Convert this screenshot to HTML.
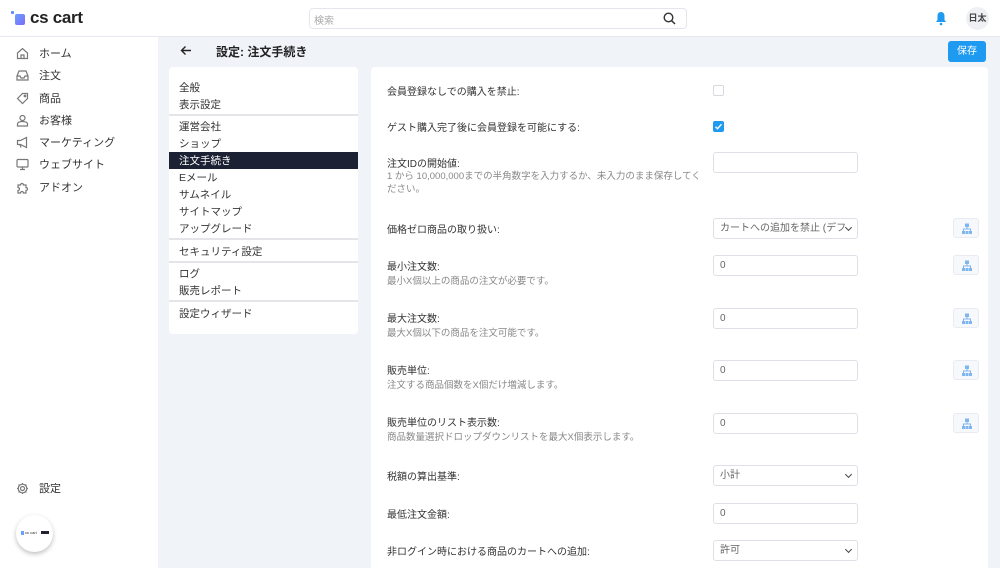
<!DOCTYPE html>
<html style="overflow:hidden;width:1000px;height:568px"><head><meta charset="utf-8"><style>
*{box-sizing:border-box;margin:0;padding:0}
body{width:1000px;height:568px;overflow:hidden;background:#f0f3f8;font-family:"Liberation Sans","Noto Sans CJK JP",sans-serif;color:#333;position:relative;font-size:10px}
.a{position:absolute}
.top{left:0;top:0;width:1000px;height:37px;background:#fff;border-bottom:1px solid #e6e9ef}
.side{left:0;top:37px;width:158px;height:531px;background:#fff}
.nav{left:16px;font-size:11px;color:#333;display:flex;align-items:center}
.nav svg{width:13px;height:13px;margin-right:10px;stroke:#777;fill:none;stroke-width:1.2}
.panel{background:#fff;border-radius:4px}
.mi{left:179px;font-size:10.5px;color:#333}
.sep{left:169px;width:189px;height:2px;background:#e3e5e9}
.lb{left:387px;font-size:10px;color:#333}
.ds{left:387px;font-size:9.5px;color:#888;line-height:13px;width:318px}
.in{left:713px;width:145px;height:21px;border:1px solid #dde1e7;border-radius:3px;background:#fff;font-size:10px;color:#666;padding-left:6px;line-height:19px}
.sel::after{content:"";position:absolute;right:6px;top:6px;width:4px;height:4px;border-right:1.3px solid #444;border-bottom:1.3px solid #444;transform:rotate(45deg)}
.ib{left:953px;width:26px;height:20px;border:1px solid #e8ebf0;border-radius:3px;background:#f6f8fb}
.ib svg{position:absolute;left:8px;top:4px}
</style></head><body>
<div class="a top"></div>
<div class="a" style="left:11px;top:11px;width:3px;height:3px;background:#5b8cff;border-radius:1px"></div>
<div class="a" style="left:15px;top:14px;width:10px;height:11px;background:linear-gradient(135deg,#6aa0ff,#7b6cf6);border-radius:2px"></div>
<div class="a" style="left:30px;top:8px;font-size:17px;font-weight:bold;color:#222;letter-spacing:-0.3px">cs cart</div>
<div class="a" style="left:309px;top:8px;width:378px;height:21px;border:1px solid #e3e6ec;border-radius:4px;background:#fff"></div>
<div class="a" style="left:314px;top:12px;font-size:10px;color:#aaa">検索</div>
<svg class="a" style="left:663px;top:12px" width="13" height="13" viewBox="0 0 13 13"><circle cx="5.5" cy="5.5" r="4.3" fill="none" stroke="#333" stroke-width="1.4"/><path d="M8.6 8.6L12 12" stroke="#333" stroke-width="1.5"/></svg>
<svg class="a" style="left:935px;top:11px" width="12" height="15" viewBox="0 0 12 15"><path d="M6 1C3.5 1 2.5 3 2.5 5v4L1 11h10L9.5 9V5C9.5 3 8.5 1 6 1z" fill="#1e9bf0"/><circle cx="6" cy="13" r="1.3" fill="#1e9bf0"/></svg>
<div class="a" style="left:966px;top:7px;width:23px;height:23px;border-radius:50%;background:#eef0f4;font-size:9px;font-weight:bold;color:#444;text-align:center;line-height:23px">日太</div>

<div class="a side"></div>
<div class="a nav" style="top:45px"><svg viewBox="0 0 13 13"><path d="M1.5 6L6.5 1.5 11.5 6v5.5h-10z M5 11.5V8h3v3.5"/></svg>ホーム</div>
<div class="a nav" style="top:67px"><svg viewBox="0 0 13 13"><path d="M1 7l2-5h7l2 5v4H1z M1 7h3l1 2h3l1-2h3"/></svg>注文</div>
<div class="a nav" style="top:90px"><svg viewBox="0 0 13 13"><path d="M1.5 6.5L6.5 1.5H11.5V6.5L6.5 11.5z"/><circle cx="9" cy="4" r="0.8"/></svg>商品</div>
<div class="a nav" style="top:112px"><svg viewBox="0 0 13 13"><circle cx="6.5" cy="4" r="2.5"/><path d="M1.5 12v-2c0-1.5 2-2.5 5-2.5s5 1 5 2.5v2z"/></svg>お客様</div>
<div class="a nav" style="top:134px"><svg viewBox="0 0 13 13"><path d="M1.5 4.5h3l6-3v10l-6-3h-3z M4 8.5l1 3"/></svg>マーケティング</div>
<div class="a nav" style="top:156px"><svg viewBox="0 0 13 13"><rect x="1" y="1.5" width="11" height="7.5" rx="1"/><path d="M6.5 9v2.5M4 11.5h5"/></svg>ウェブサイト</div>
<div class="a nav" style="top:179px"><svg viewBox="0 0 13 13"><path d="M2 4h2.5a1.5 1.5 0 013 0H10v2.5a1.5 1.5 0 010 3V12H7.5a1.5 1.5 0 00-3 0H2V9.5a1.5 1.5 0 000-3z"/></svg>アドオン</div>
<div class="a nav" style="top:480px"><svg viewBox="0 0 13 13"><circle cx="6.5" cy="6.5" r="2"/><path d="M6.5 1v1.5M6.5 10.5V12M1 6.5h1.5M10.5 6.5H12M2.6 2.6l1 1M9.4 9.4l1 1M2.6 10.4l1-1M9.4 3.6l1-1"/><circle cx="6.5" cy="6.5" r="4.3"/></svg>設定</div>
<div class="a" style="left:16px;top:515px;width:37px;height:37px;border-radius:50%;background:#fff;box-shadow:0 2px 5px rgba(0,0,0,.25)"></div>
<div class="a" style="left:21px;top:531px;width:3px;height:4px;background:#6aa0ff"></div>
<div class="a" style="left:25px;top:530px;font-size:4px;color:#333">cs cart</div>
<div class="a" style="left:41px;top:531px;width:8px;height:3px;background:#223"></div>

<svg class="a" style="left:180px;top:45px" width="12" height="11" viewBox="0 0 12 11"><path d="M11 5.5H1.5M5.5 1.5L1.5 5.5l4 4" fill="none" stroke="#222" stroke-width="1.4"/></svg>
<div class="a" style="left:216px;top:43px;font-size:12px;font-weight:bold;color:#222">設定: 注文手続き</div>
<div class="a" style="left:948px;top:41px;width:38px;height:21px;background:#1e9bf0;border-radius:3px;color:#fff;font-size:10px;text-align:center;line-height:21px">保存</div>

<div class="a panel" style="left:169px;top:67px;width:189px;height:267px"></div>
<div class="a mi" style="top:80px">全般</div>
<div class="a mi" style="top:97px">表示設定</div>
<div class="a sep" style="top:114px"></div>
<div class="a mi" style="top:119px">運営会社</div>
<div class="a mi" style="top:136px">ショップ</div>
<div class="a" style="left:169px;top:152px;width:189px;height:17px;background:#1c2133"></div>
<div class="a mi" style="top:153px;color:#fff">注文手続き</div>
<div class="a mi" style="top:170px">Eメール</div>
<div class="a mi" style="top:187px">サムネイル</div>
<div class="a mi" style="top:204px">サイトマップ</div>
<div class="a mi" style="top:221px">アップグレード</div>
<div class="a sep" style="top:238px"></div>
<div class="a mi" style="top:244px">セキュリティ設定</div>
<div class="a sep" style="top:261px"></div>
<div class="a mi" style="top:266px">ログ</div>
<div class="a mi" style="top:283px">販売レポート</div>
<div class="a sep" style="top:300px"></div>
<div class="a mi" style="top:306px">設定ウィザード</div>

<div class="a panel" style="left:371px;top:67px;width:617px;height:501px;border-radius:4px 4px 0 0"></div>
<div class="a lb" style="top:83px">会員登録なしでの購入を禁止:</div>
<div class="a" style="left:713px;top:85px;width:11px;height:11px;border:1px solid #d5d9e0;border-radius:2px;background:#fff"></div>
<div class="a lb" style="top:119px">ゲスト購入完了後に会員登録を可能にする:</div>
<div class="a" style="left:713px;top:121px;width:11px;height:11px;border-radius:2px;background:#1e9bf0"></div>
<svg class="a" style="left:714px;top:122px" width="9" height="9" viewBox="0 0 9 9"><path d="M1.5 4.7l2 2 4-4.5" fill="none" stroke="#fff" stroke-width="1.4"/></svg>

<div class="a lb" style="top:155px">注文IDの開始値:</div>
<div class="a ds" style="top:170px">1 から 10,000,000までの半角数字を入力するか、未入力のまま保存してください。</div>
<div class="a in" style="top:152px"></div>

<div class="a lb" style="top:221px">価格ゼロ商品の取り扱い:</div>
<div class="a in sel" style="top:218px;padding-right:16px;white-space:nowrap;overflow:hidden">カートへの追加を禁止 (デフ</div>
<div class="a ib" style="top:218px"><svg width="10" height="11" viewBox="0 0 10 11"><rect x="3" y="0.5" width="4" height="3.5" fill="#7fb6ef"/><path d="M5 4v2M1.5 8V6h7v2" stroke="#7fb6ef" fill="none"/><rect x="0" y="8" width="3" height="3" fill="#7fb6ef"/><rect x="3.5" y="8" width="3" height="3" fill="#7fb6ef"/><rect x="7" y="8" width="3" height="3" fill="#7fb6ef"/></svg></div>

<div class="a lb" style="top:258px">最小注文数:</div>
<div class="a ds" style="top:275px">最小X個以上の商品の注文が必要です。</div>
<div class="a in" style="top:255px">0</div>
<div class="a ib" style="top:255px"><svg width="10" height="11" viewBox="0 0 10 11"><rect x="3" y="0.5" width="4" height="3.5" fill="#7fb6ef"/><path d="M5 4v2M1.5 8V6h7v2" stroke="#7fb6ef" fill="none"/><rect x="0" y="8" width="3" height="3" fill="#7fb6ef"/><rect x="3.5" y="8" width="3" height="3" fill="#7fb6ef"/><rect x="7" y="8" width="3" height="3" fill="#7fb6ef"/></svg></div>

<div class="a lb" style="top:310px">最大注文数:</div>
<div class="a ds" style="top:327px">最大X個以下の商品を注文可能です。</div>
<div class="a in" style="top:308px">0</div>
<div class="a ib" style="top:308px"><svg width="10" height="11" viewBox="0 0 10 11"><rect x="3" y="0.5" width="4" height="3.5" fill="#7fb6ef"/><path d="M5 4v2M1.5 8V6h7v2" stroke="#7fb6ef" fill="none"/><rect x="0" y="8" width="3" height="3" fill="#7fb6ef"/><rect x="3.5" y="8" width="3" height="3" fill="#7fb6ef"/><rect x="7" y="8" width="3" height="3" fill="#7fb6ef"/></svg></div>

<div class="a lb" style="top:362px">販売単位:</div>
<div class="a ds" style="top:379px">注文する商品個数をX個だけ増減します。</div>
<div class="a in" style="top:360px">0</div>
<div class="a ib" style="top:360px"><svg width="10" height="11" viewBox="0 0 10 11"><rect x="3" y="0.5" width="4" height="3.5" fill="#7fb6ef"/><path d="M5 4v2M1.5 8V6h7v2" stroke="#7fb6ef" fill="none"/><rect x="0" y="8" width="3" height="3" fill="#7fb6ef"/><rect x="3.5" y="8" width="3" height="3" fill="#7fb6ef"/><rect x="7" y="8" width="3" height="3" fill="#7fb6ef"/></svg></div>

<div class="a lb" style="top:414px">販売単位のリスト表示数:</div>
<div class="a ds" style="top:431px;width:340px">商品数量選択ドロップダウンリストを最大X個表示します。</div>
<div class="a in" style="top:413px">0</div>
<div class="a ib" style="top:413px"><svg width="10" height="11" viewBox="0 0 10 11"><rect x="3" y="0.5" width="4" height="3.5" fill="#7fb6ef"/><path d="M5 4v2M1.5 8V6h7v2" stroke="#7fb6ef" fill="none"/><rect x="0" y="8" width="3" height="3" fill="#7fb6ef"/><rect x="3.5" y="8" width="3" height="3" fill="#7fb6ef"/><rect x="7" y="8" width="3" height="3" fill="#7fb6ef"/></svg></div>

<div class="a lb" style="top:468px">税額の算出基準:</div>
<div class="a in sel" style="top:465px">小計</div>
<div class="a lb" style="top:506px">最低注文金額:</div>
<div class="a in" style="top:503px">0</div>
<div class="a lb" style="top:543px">非ログイン時における商品のカートへの追加:</div>
<div class="a in sel" style="top:540px">許可</div>
</body></html>
